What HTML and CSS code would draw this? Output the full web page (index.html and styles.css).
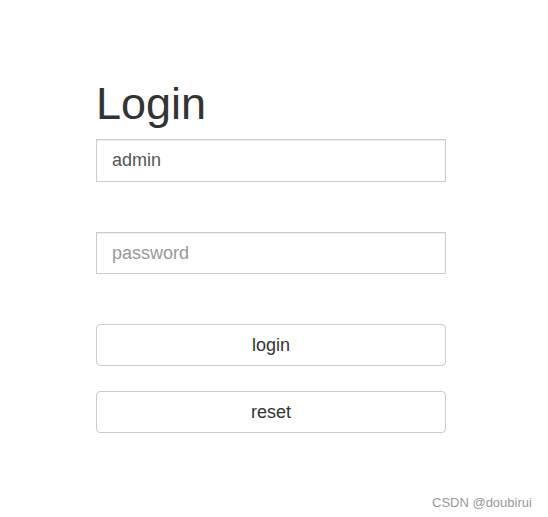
FILE: index.html
```html
<!DOCTYPE html>
<html>
<head>
<meta charset="utf-8">
<link rel="stylesheet" href="styles.css">
</head>
<body>
<div class="page">
  <form class="login">
    <h1 class="title">Login</h1>
    <input class="field" type="text" value="admin">
    <input class="field field-short gap-lg" type="password" placeholder="password">
    <button class="btn gap-lg" type="button">login</button>
    <button class="btn gap-sm" type="button">reset</button>
  </form>
</div>
<div class="watermark">CSDN @doubirui</div>
</body>
</html>
```
FILE: styles.css
```css
html, body {
  margin: 0;
  padding: 0;
  background: #fff;
  font-family: "Liberation Sans", Arial, sans-serif;
}
.page {
  padding: 78px 0 0 96px;
}
.login {
  width: 350px;
  display: flex;
  flex-direction: column;
}
.title {
  margin: 0 0 10px 0;
  font-size: 45px;
  font-weight: 400;
  line-height: 51px;
  color: #333;
}
.field {
  box-sizing: border-box;
  height: 43px;
  width: 100%;
  margin: 0;
  padding: 0 15px;
  border: 1px solid #ccc;
  border-radius: 0;
  font-family: "Liberation Sans", Arial, sans-serif;
  font-size: 18px;
  color: #555;
  outline: none;
  box-shadow: inset 0 1px 1px rgba(0,0,0,0.075);
}
.field-short { height: 42px; }
.field::placeholder {
  color: #999;
}
.gap-lg { margin-top: 50px; }
.gap-sm { margin-top: 25px; }
.btn {
  box-sizing: border-box;
  height: 42px;
  width: 100%;
  padding: 0;
  border: 1px solid #ccc;
  border-radius: 4px;
  background: #fff;
  font-family: "Liberation Sans", Arial, sans-serif;
  font-size: 18px;
  color: #333;
}
.watermark {
  position: absolute;
  left: 432px;
  top: 495px;
  font-size: 13px;
  color: #999;
}
```
